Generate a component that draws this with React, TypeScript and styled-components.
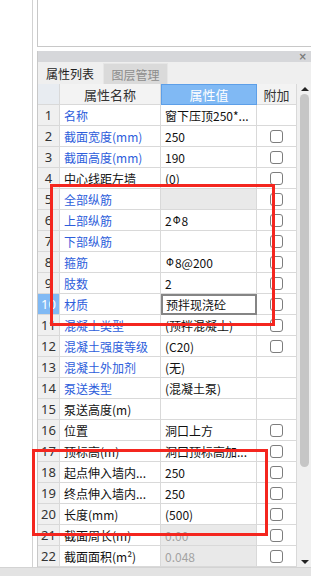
import React from 'react';
import styled, { createGlobalStyle } from 'styled-components';

const Global = createGlobalStyle`
  html, body { margin: 0; padding: 0; background: #fff; }
  body { font-family: "Noto Sans CJK SC", "Noto Sans", sans-serif; }
  * { box-sizing: border-box; }
`;

const Page = styled.div`
  position: relative;
  width: 311px;
  height: 576px;
  overflow: hidden;
  display: flex;
  flex-direction: column;
  background: #fff;
`;

const Main = styled.div`
  display: flex;
  height: 567px;
`;

const LeftStrip = styled.div`
  width: 33px;
  border-right: 1px solid #d2d2d2;
  background: #fff;
`;

const Gutter = styled.div`
  width: 4px;
`;

const RightCol = styled.div`
  flex: 1;
  min-width: 0;
  display: flex;
  flex-direction: column;
  gap: 4px;
`;

const TopPanel = styled.div`
  height: 47px;
  border-left: 1px solid #c8c8c8;
  border-bottom: 1px solid #c8c8c8;
  background: #fff;
`;

const Dock = styled.div`
  flex: 1;
  display: flex;
  flex-direction: column;
  border-left: 1px solid #c8c8c8;
  background: #efefef;
`;

const TitleBar = styled.div`
  height: 11px;
  background: #d6d7da;
  display: flex;
  align-items: center;
  justify-content: flex-end;
  padding-right: 4px;
`;

const Close = styled.span`
  font-family: "DejaVu Sans", sans-serif;
  font-size: 10px;
  line-height: 11px;
  color: #7b7b7b;
  font-weight: bold;
`;

const Tabs = styled.div`
  height: 22px;
  display: flex;
  align-items: flex-end;
  background: #efefef;
`;

const Tab = styled.div<{ $active?: boolean }>`
  height: ${p => (p.$active ? 22 : 21)}px;
  width: ${p => (p.$active ? 64 : 65)}px;
  margin-left: ${p => (p.$active ? 0 : 1)}px;
  display: flex;
  align-items: center;
  justify-content: center;
  font-size: 12px;
  color: ${p => (p.$active ? '#1e1e1e' : '#8c8c8c')};
  background: ${p => (p.$active ? '#efefef' : '#dadada')};
  border: ${p => (p.$active ? 'none' : '1px solid #e6e6e6')};
  border-bottom: none;
`;

const GridArea = styled.div`
  flex: 1;
  display: flex;
  min-height: 0;
`;

const Table = styled.div`
  width: 259px;
  display: flex;
  flex-direction: column;
  background: #fff;
`;

const Row = styled.div`
  display: grid;
  grid-template-columns: 22px 101px 96px 40px;
  height: 21px;
`;

const Cell = styled.div`
  height: 21px;
  border-right: 1px solid #d9d9d9;
  border-bottom: 1px solid #d9d9d9;
  display: flex;
  align-items: center;
  font-size: 12px;
  white-space: nowrap;
  overflow: hidden;
`;

const NumCell = styled(Cell)<{ $sel?: boolean; $head?: boolean }>`
  justify-content: center;
  font-family: "Noto Sans", sans-serif;
  font-size: 13px;
  color: ${p => (p.$sel ? '#fff' : '#333')};
  background: ${p => (p.$sel ? '#80b9f4' : p.$head ? '#e8ecf1' : '#f0f0f0')};
`;

const HeadCell = styled(Cell)<{ $blue?: boolean }>`
  justify-content: center;
  color: ${p => (p.$blue ? '#fff' : '#333')};
  background: ${p => (p.$blue ? '#80b9f4' : '#f3f3f3')};
  border: ${p => (p.$blue ? '1px solid #5d9fe8' : undefined)};
  font-size: 13px;
`;

const NameCell = styled(Cell)<{ $blue?: boolean }>`
  padding-left: 4px;
  color: ${p => (p.$blue ? '#2d5ddb' : '#111')};
`;

const ValueCell = styled(Cell)<{ $grey?: boolean; $disabled?: boolean; $editing?: boolean }>`
  padding-left: ${p => (p.$editing ? 3 : 4)}px;
  color: ${p => (p.$disabled ? '#a3a3a3' : '#111')};
  background: ${p => (p.$grey || p.$disabled ? '#e9e9e9' : '#fff')};
  border: ${p => (p.$editing ? '2px solid #858585' : undefined)};
`;

const AddCell = styled(Cell)`
  justify-content: center;
`;

const Check = styled.span`
  width: 13px;
  height: 13px;
  border: 1px solid #7d7d7d;
  border-radius: 3px;
  background: #fff;
`;

const Rebar = styled.span`
  font-family: "DejaVu Sans", sans-serif;
  font-size: 10px;
  margin: 0 1px;
`;

const Scroll = styled.div`
  width: 14px;
  background: #f0f0f0;
  display: flex;
  flex-direction: column;
  align-items: center;
  padding: 3px 0 3px 1px;
`;

const Arrow = styled.span<{ $down?: boolean }>`
  width: 0;
  height: 0;
  border-left: 4px solid transparent;
  border-right: 4px solid transparent;
  ${p => (p.$down ? 'border-top: 4px solid #222;' : 'border-bottom: 4px solid #222;')}
`;

const Thumb = styled.div`
  width: 9px;
  height: 373px;
  margin-top: 3px;
  border-radius: 5px;
  background: #c6c6c6;
`;

const Spacer = styled.div`
  flex: 1;
`;

const BottomBar = styled.div`
  height: 9px;
  background: #e3e3e3;
  border-top: 1px solid #d3d3d3;
`;

const Mark = styled.div<{ $l: number; $t: number; $w: number; $h: number }>`
  position: absolute;
  left: ${p => p.$l}px;
  top: ${p => p.$t}px;
  width: ${p => p.$w}px;
  height: ${p => p.$h}px;
  border: 3px solid #f4261f;
  pointer-events: none;
`;

type R = {
  n: string;
  v: React.ReactNode;
  blue?: boolean;
  cb?: boolean;
  grey?: boolean;
  disabled?: boolean;
  editing?: boolean;
};

const rows: R[] = [
  { n: '名称', v: '窗下压顶250*...', blue: true },
  { n: '截面宽度(mm)', v: '250', blue: true, cb: true },
  { n: '截面高度(mm)', v: '190', blue: true, cb: true },
  { n: '中心线距左墙', v: '(0)', cb: true },
  { n: '全部纵筋', v: '', blue: true, cb: true, grey: true },
  { n: '上部纵筋', v: <>2<Rebar>Φ</Rebar>8</>, blue: true, cb: true },
  { n: '下部纵筋', v: '', blue: true, cb: true },
  { n: '箍筋', v: <><Rebar>Φ</Rebar>8@200</>, blue: true, cb: true },
  { n: '肢数', v: '2', blue: true, cb: true },
  { n: '材质', v: '预拌现浇砼', blue: true, cb: true, editing: true },
  { n: '混凝土类型', v: '(预拌混凝土)', blue: true, cb: true },
  { n: '混凝土强度等级', v: '(C20)', blue: true, cb: true },
  { n: '混凝土外加剂', v: '(无)', blue: true },
  { n: '泵送类型', v: '(混凝土泵)', blue: true },
  { n: '泵送高度(m)', v: '' },
  { n: '位置', v: '洞口上方', cb: true },
  { n: '顶标高(m)', v: '洞口顶标高加...', cb: true },
  { n: '起点伸入墙内...', v: '250', cb: true },
  { n: '终点伸入墙内...', v: '250', cb: true },
  { n: '长度(mm)', v: '(500)', cb: true },
  { n: '截面周长(m)', v: '0.00', cb: true, disabled: true },
  { n: '截面面积(m²)', v: '0.048', cb: true, disabled: true },
];

export default function App() {
  return (
    <Page>
      <Global />
      <Main>
        <LeftStrip />
        <Gutter />
        <RightCol>
          <TopPanel />
          <Dock>
            <TitleBar>
              <Close>×</Close>
            </TitleBar>
            <Tabs>
              <Tab $active>属性列表</Tab>
              <Tab>图层管理</Tab>
            </Tabs>
            <GridArea>
              <Table>
                <Row>
                  <NumCell $head />
                  <HeadCell>属性名称</HeadCell>
                  <HeadCell $blue>属性值</HeadCell>
                  <HeadCell>附加</HeadCell>
                </Row>
                {rows.map((r, i) => (
                  <Row key={i}>
                    <NumCell $sel={r.editing}>{i + 1}</NumCell>
                    <NameCell $blue={r.blue}>{r.n}</NameCell>
                    <ValueCell $grey={r.grey} $disabled={r.disabled} $editing={r.editing}>
                      {r.v}
                    </ValueCell>
                    <AddCell>{r.cb && <Check />}</AddCell>
                  </Row>
                ))}
              </Table>
              <Scroll>
                <Arrow />
                <Thumb />
                <Spacer />
                <Arrow $down />
              </Scroll>
            </GridArea>
          </Dock>
        </RightCol>
      </Main>
      <BottomBar />
      <Mark $l={50} $t={184} $w={225} $h={142} />
      <Mark $l={32} $t={449} $w={236} $h={87} />
    </Page>
  );
}
